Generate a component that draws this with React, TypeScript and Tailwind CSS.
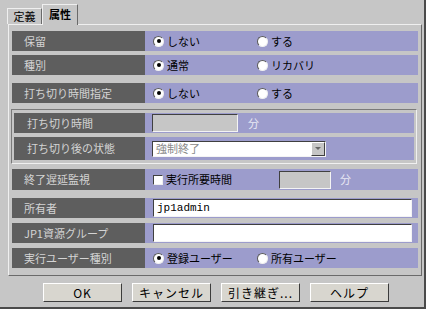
const font = { fontFamily: '"Noto Sans CJK JP", "Noto Sans", sans-serif' }

function Radio({ checked, label }: { checked?: boolean; label: string }) {
  return (
    <span className="flex items-center gap-[3px] text-[11px] text-black leading-none">
      <span className="flex h-[11px] w-[11px] items-center justify-center rounded-full border border-t-[#5a5a5a] border-l-[#5a5a5a] border-r-[#f0f0f0] border-b-[#f0f0f0] bg-white">
        {checked && <span className="h-[4px] w-[4px] rounded-full bg-black" />}
      </span>
      {label}
    </span>
  )
}

function Label({ text }: { text: string }) {
  return (
    <div className="flex w-[133px] shrink-0 items-center bg-[#5e5e5e] pl-[12px] text-[11px] text-[#d4d4d4]">
      {text}
    </div>
  )
}

function Row({ label, children, className = '' }: { label: string; children: React.ReactNode; className?: string }) {
  return (
    <div className={`flex h-[20px] ${className}`}>
      <Label text={label} />
      <div className="flex flex-1 items-center bg-[#9c9ccc] pl-[8px]">{children}</div>
    </div>
  )
}

function Field({ value = '', className = '', disabled }: { value?: string; className?: string; disabled?: boolean }) {
  return (
    <div
      className={`flex h-[18px] items-center border border-t-[#404040] border-l-[#404040] border-r-[#f4f4f4] border-b-[#f4f4f4] px-[3px] text-[11px] text-black ${disabled ? 'bg-[#c6c6c6]' : 'bg-white'} ${className}`}
      style={{ fontFamily: '"Liberation Mono", monospace' }}
    >
      {value}
    </div>
  )
}

function Button({ text }: { text: string }) {
  return (
    <div className="flex h-[19px] w-[79px] items-center justify-center border border-t-white border-l-white border-r-[#3c3c3c] border-b-[#3c3c3c] bg-[#d8d6cf] text-[12px] tracking-[1px] text-black">
      {text}
    </div>
  )
}

export default function App() {
  return (
    <div className="h-[313px] w-[429px] bg-white" style={font}>
      <div className="flex h-[309px] w-[426px] flex-col border-r-2 border-b-2 border-r-[#4a4a4a] border-b-[#4a4a4a] bg-[#c6c6c6]">
        {/* tabs */}
        <div className="flex h-[24px] items-end pl-[7px]">
          <div className="flex h-[16px] w-[35px] items-center justify-center border border-b-0 border-t-[#efefef] border-l-[#efefef] border-r-[#6a6a6a] bg-[#c6c6c6] text-[11px] text-black">
            定義
          </div>
          <div className="relative -mb-px flex h-[21px] w-[36px] items-center justify-center border border-b-0 border-t-[#efefef] border-l-[#efefef] border-r-[#6a6a6a] bg-[#c6c6c6] pb-[2px] text-[11px] font-bold text-black">
            属性
          </div>
        </div>

        {/* panel */}
        <div className="ml-[8px] flex h-[252px] w-[414px] flex-col border border-t-[#efefef] border-l-[#efefef] border-r-[#6a6a6a] border-b-[#6a6a6a] pl-[3px] pr-[3px]">
          <Row label="保留" className="mt-[6px]">
            <div className="w-[104px]"><Radio checked label="しない" /></div>
            <Radio label="する" />
          </Row>
          <Row label="種別" className="mt-[4px]">
            <div className="w-[104px]"><Radio checked label="通常" /></div>
            <Radio label="リカバリ" />
          </Row>
          <Row label="打ち切り時間指定" className="mt-[8px]">
            <div className="w-[104px]"><Radio checked label="しない" /></div>
            <Radio label="する" />
          </Row>

          {/* group */}
          <div className="mt-[6px] ml-[-1px] flex w-[406px] flex-col border border-t-[#7a7a7a] border-l-[#7a7a7a] border-r-[#f0f0f0] border-b-[#f0f0f0] px-[2px] pt-[3px] pb-[3px]">
            <div className="flex h-[20px]">
              <div className="flex w-[131px] shrink-0 items-center bg-[#5e5e5e] pl-[13px] text-[11px] text-[#d4d4d4]">打ち切り時間</div>
              <div className="flex flex-1 items-center bg-[#9c9ccc] pl-[7px]">
                <Field disabled className="w-[86px]" />
                <span className="ml-[10px] text-[11px] text-[#e8e8f4]">分</span>
              </div>
            </div>
            <div className="mt-[4px] flex h-[23px]">
              <div className="flex w-[131px] shrink-0 items-center bg-[#5e5e5e] pl-[13px] text-[11px] text-[#d4d4d4]">打ち切り後の状態</div>
              <div className="flex flex-1 items-center bg-[#9c9ccc] pl-[7px]">
                <div className="flex h-[16px] w-[174px] items-center border border-t-[#404040] border-l-[#404040] border-r-[#f4f4f4] border-b-[#f4f4f4] bg-white pl-[3px] text-[11px] text-[#8a8a8a]">
                  <span className="flex-1">強制終了</span>
                  <span className="flex h-[14px] w-[14px] items-center justify-center border border-t-white border-l-white border-r-[#404040] border-b-[#404040] bg-[#c6c6c6]">
                    <svg width="6" height="4" viewBox="0 0 6 4"><path d="M0 0h6L3 3z" fill="#666" /></svg>
                  </span>
                </div>
              </div>
            </div>
          </div>

          <Row label="終了遅延監視" className="mt-[5px] h-[21px]">
            <span className="flex items-center gap-[3px] text-[11px] text-black">
              <span className="h-[10px] w-[10px] border border-t-[#404040] border-l-[#404040] border-r-[#f0f0f0] border-b-[#f0f0f0] bg-white" />
              実行所要時間
            </span>
            <Field disabled className="ml-[47px] w-[52px]" />
            <span className="ml-[9px] text-[11px] text-[#e8e8f4]">分</span>
          </Row>
          <Row label="所有者" className="mt-[8px]">
            <Field value="jp1admin" className="w-[259px]" />
          </Row>
          <Row label="JP1資源グループ" className="mt-[5px]">
            <Field className="w-[259px]" />
          </Row>
          <Row label="実行ユーザー種別" className="mt-[5px]">
            <div className="w-[104px]"><Radio checked label="登録ユーザー" /></div>
            <Radio label="所有ユーザー" />
          </Row>
        </div>

        {/* buttons */}
        <div className="mt-[7px] flex gap-[10px] pl-[43px]">
          <Button text="OK" />
          <Button text="キャンセル" />
          <Button text="引き継ぎ..." />
          <Button text="ヘルプ" />
        </div>
      </div>
    </div>
  )
}
